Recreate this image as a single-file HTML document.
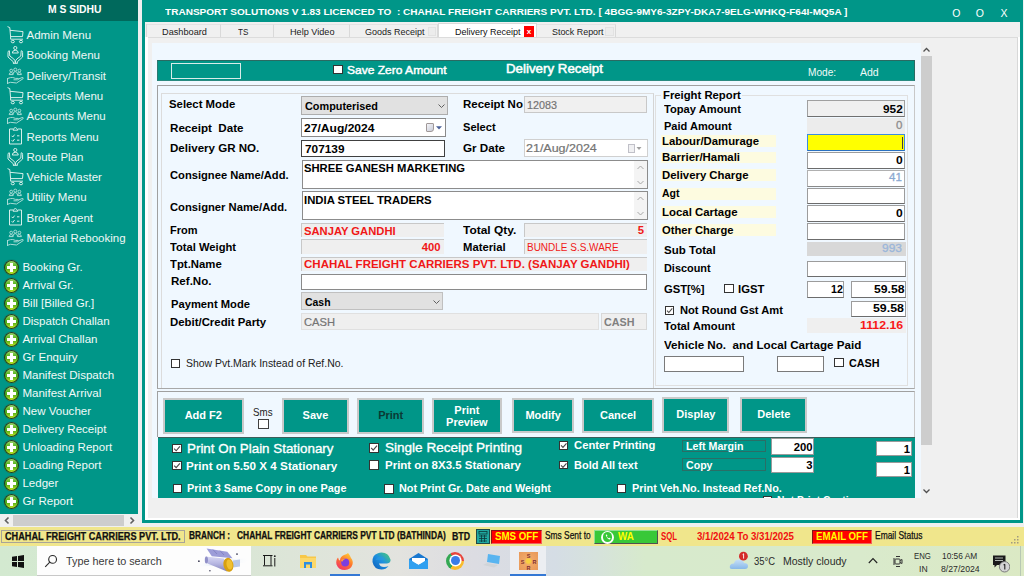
<!DOCTYPE html><html><head><meta charset="utf-8"><style>
*{margin:0;padding:0}
html,body{width:1024px;height:576px;overflow:hidden;background:#f0f0f0;position:relative;font-family:"Liberation Sans",sans-serif}
div,span,svg{position:absolute}
span{white-space:pre;display:block;transform-origin:0 50%}
.plus{width:15px;height:15px;border-radius:50%;background:linear-gradient(180deg,#b0dc80 0%,#60b828 35%,#48a818 55%,#a8d820 85%,#e0f030 100%);box-shadow:0 0 0 1px #143c28 inset,0 0 1px #0a3020}
.plus:before{content:"";position:absolute;left:6px;top:3px;width:3px;height:9px;background:#fff}
.plus:after{content:"";position:absolute;left:3px;top:6px;width:9px;height:3px;background:#fff}
.cb{background:#fff;border:1px solid #333;box-sizing:border-box}
</style></head><body>
<div style="left:0px;top:0px;width:138.00px;height:514.00px;background:#009688"></div>
<div style="left:0px;top:0px;width:138.00px;height:21.00px;background:#00695c"></div>
<span style="left:47.5px;top:5.38px;font-size:10.3px;line-height:10.3px;font-weight:bold;color:#fff;transform:scaleX(1.0056);">M S SIDHU</span>
<svg style="position:absolute;left:7px;top:26.0px;opacity:0.95" width="18" height="18" viewBox="0 0 18 18" fill="none" stroke="#e0f4f0" stroke-width="1"><path d="M0.5 0.6 L2.8 1.6 L3.6 11 L3.6 13.2"/><path d="M3 4.3 L16 5.6 L15.5 10.6 L3.6 10.6"/><path d="M3.6 13.2 L16 13.2"/><ellipse cx="5.8" cy="15.6" rx="1.6" ry="1.2"/><ellipse cx="14" cy="15.6" rx="1.6" ry="1.2"/></svg>
<span style="left:26.5px;top:30.17px;font-size:11.5px;line-height:11.5px;font-weight:normal;color:#eef8f6;">Admin Menu</span>
<svg style="position:absolute;left:7px;top:46.3px;opacity:0.95" width="18" height="18" viewBox="0 0 18 18" fill="none" stroke="#e0f4f0" stroke-width="1"><circle cx="8.3" cy="2" r="1.6"/><path d="M5.3 7 Q5.3 4.3 8.3 4.3 Q11.3 4.3 11.3 7 Z"/><path d="M2.3 4.6 Q1 4.8 1 6.5 L1 11 L6.3 15.8 L6.3 17.3 M14.3 4.6 Q15.6 4.8 15.6 6.5 L15.6 11 L10.3 15.8 L10.3 17.3 M6 17.3 H10.6"/><path d="M2.4 4.8 L2.8 10 L6.8 13 Q8.3 14.2 8.3 17.2 M14.2 4.8 L13.8 10 L9.8 13 Q8.3 14.2 8.3 17.2"/></svg>
<span style="left:26.5px;top:50.44px;font-size:11.5px;line-height:11.5px;font-weight:normal;color:#eef8f6;">Booking Menu</span>
<svg style="position:absolute;left:7px;top:66.5px;opacity:0.75" width="18" height="18" viewBox="0 0 18 18" fill="none" stroke="#e0f4f0" stroke-width="1"><circle cx="4.2" cy="3.6" r="1.4"/><circle cx="8.3" cy="2.6" r="1.5"/><circle cx="12.4" cy="3.6" r="1.4"/><path d="M2.2 7.6 Q2.2 5.6 4.2 5.6 Q6.2 5.6 6.2 7.6 Z M6.2 6.8 Q6.2 4.6 8.3 4.6 Q10.4 4.6 10.4 6.8 M10.4 7.6 Q10.4 5.6 12.4 5.6 Q14.4 5.6 14.4 7.6 Z"/><path d="M0.5 11.5 L3.5 10.6 Q5.5 10 8.5 11.4 L11 11.4 Q12 12.4 10.5 12.8 L6.5 12.8 M0.5 16.3 L3.5 15.3 L9.5 16 L16.2 11.6 Q16.5 10.2 15 10.6 L11 12.2"/><path d="M0.5 11 V17"/></svg>
<span style="left:26.5px;top:70.71px;font-size:11.5px;line-height:11.5px;font-weight:normal;color:#eef8f6;">Delivery/Transit</span>
<svg style="position:absolute;left:7px;top:86.8px;opacity:0.95" width="18" height="18" viewBox="0 0 18 18" fill="none" stroke="#e0f4f0" stroke-width="1"><path d="M0.5 0.6 L2.8 1.6 L3.6 11 L3.6 13.2"/><path d="M3 4.3 L16 5.6 L15.5 10.6 L3.6 10.6"/><path d="M3.6 13.2 L16 13.2"/><ellipse cx="5.8" cy="15.6" rx="1.6" ry="1.2"/><ellipse cx="14" cy="15.6" rx="1.6" ry="1.2"/></svg>
<span style="left:26.5px;top:90.98px;font-size:11.5px;line-height:11.5px;font-weight:normal;color:#eef8f6;">Receipts Menu</span>
<svg style="position:absolute;left:7px;top:107.1px;opacity:0.75" width="18" height="18" viewBox="0 0 18 18" fill="none" stroke="#e0f4f0" stroke-width="1"><circle cx="4.2" cy="3.6" r="1.4"/><circle cx="8.3" cy="2.6" r="1.5"/><circle cx="12.4" cy="3.6" r="1.4"/><path d="M2.2 7.6 Q2.2 5.6 4.2 5.6 Q6.2 5.6 6.2 7.6 Z M6.2 6.8 Q6.2 4.6 8.3 4.6 Q10.4 4.6 10.4 6.8 M10.4 7.6 Q10.4 5.6 12.4 5.6 Q14.4 5.6 14.4 7.6 Z"/><path d="M0.5 11.5 L3.5 10.6 Q5.5 10 8.5 11.4 L11 11.4 Q12 12.4 10.5 12.8 L6.5 12.8 M0.5 16.3 L3.5 15.3 L9.5 16 L16.2 11.6 Q16.5 10.2 15 10.6 L11 12.2"/><path d="M0.5 11 V17"/></svg>
<span style="left:26.5px;top:111.25px;font-size:11.5px;line-height:11.5px;font-weight:normal;color:#eef8f6;">Accounts Menu</span>
<svg style="position:absolute;left:7px;top:127.3px;opacity:0.95" width="18" height="18" viewBox="0 0 18 18" fill="none" stroke="#e0f4f0" stroke-width="1"><path d="M6 2 H2.5 V17 H14.5 V2 H11"/><path d="M6 3.2 L6.8 1.4 Q8.3 -0.4 9.8 1.4 L10.8 3.2 Z"/><path d="M4.6 8.8 L5.8 10 L7.6 7.6 M10 8.8 H12.4 M4.6 13.2 L5.8 14.4 L7.6 12 M10 13.2 H12.4"/></svg>
<span style="left:26.5px;top:131.52px;font-size:11.5px;line-height:11.5px;font-weight:normal;color:#eef8f6;">Reports Menu</span>
<svg style="position:absolute;left:7px;top:147.6px;opacity:0.95" width="18" height="18" viewBox="0 0 18 18" fill="none" stroke="#e0f4f0" stroke-width="1"><circle cx="8.3" cy="2" r="1.6"/><path d="M5.3 7 Q5.3 4.3 8.3 4.3 Q11.3 4.3 11.3 7 Z"/><path d="M2.3 4.6 Q1 4.8 1 6.5 L1 11 L6.3 15.8 L6.3 17.3 M14.3 4.6 Q15.6 4.8 15.6 6.5 L15.6 11 L10.3 15.8 L10.3 17.3 M6 17.3 H10.6"/><path d="M2.4 4.8 L2.8 10 L6.8 13 Q8.3 14.2 8.3 17.2 M14.2 4.8 L13.8 10 L9.8 13 Q8.3 14.2 8.3 17.2"/></svg>
<span style="left:26.5px;top:151.79px;font-size:11.5px;line-height:11.5px;font-weight:normal;color:#eef8f6;">Route Plan</span>
<svg style="position:absolute;left:7px;top:167.9px;opacity:0.95" width="18" height="18" viewBox="0 0 18 18" fill="none" stroke="#e0f4f0" stroke-width="1"><path d="M0.5 0.6 L2.8 1.6 L3.6 11 L3.6 13.2"/><path d="M3 4.3 L16 5.6 L15.5 10.6 L3.6 10.6"/><path d="M3.6 13.2 L16 13.2"/><ellipse cx="5.8" cy="15.6" rx="1.6" ry="1.2"/><ellipse cx="14" cy="15.6" rx="1.6" ry="1.2"/></svg>
<span style="left:26.5px;top:172.06px;font-size:11.5px;line-height:11.5px;font-weight:normal;color:#eef8f6;">Vehicle Master</span>
<svg style="position:absolute;left:7px;top:188.2px;opacity:0.75" width="18" height="18" viewBox="0 0 18 18" fill="none" stroke="#e0f4f0" stroke-width="1"><circle cx="4.2" cy="3.6" r="1.4"/><circle cx="8.3" cy="2.6" r="1.5"/><circle cx="12.4" cy="3.6" r="1.4"/><path d="M2.2 7.6 Q2.2 5.6 4.2 5.6 Q6.2 5.6 6.2 7.6 Z M6.2 6.8 Q6.2 4.6 8.3 4.6 Q10.4 4.6 10.4 6.8 M10.4 7.6 Q10.4 5.6 12.4 5.6 Q14.4 5.6 14.4 7.6 Z"/><path d="M0.5 11.5 L3.5 10.6 Q5.5 10 8.5 11.4 L11 11.4 Q12 12.4 10.5 12.8 L6.5 12.8 M0.5 16.3 L3.5 15.3 L9.5 16 L16.2 11.6 Q16.5 10.2 15 10.6 L11 12.2"/><path d="M0.5 11 V17"/></svg>
<span style="left:26.5px;top:192.33px;font-size:11.5px;line-height:11.5px;font-weight:normal;color:#eef8f6;">Utility Menu</span>
<svg style="position:absolute;left:7px;top:208.4px;opacity:0.95" width="18" height="18" viewBox="0 0 18 18" fill="none" stroke="#e0f4f0" stroke-width="1"><path d="M6 2 H2.5 V17 H14.5 V2 H11"/><path d="M6 3.2 L6.8 1.4 Q8.3 -0.4 9.8 1.4 L10.8 3.2 Z"/><path d="M4.6 8.8 L5.8 10 L7.6 7.6 M10 8.8 H12.4 M4.6 13.2 L5.8 14.4 L7.6 12 M10 13.2 H12.4"/></svg>
<span style="left:26.5px;top:212.60px;font-size:11.5px;line-height:11.5px;font-weight:normal;color:#eef8f6;">Broker Agent</span>
<svg style="position:absolute;left:7px;top:228.7px;opacity:0.75" width="18" height="18" viewBox="0 0 18 18" fill="none" stroke="#e0f4f0" stroke-width="1"><circle cx="4.2" cy="3.6" r="1.4"/><circle cx="8.3" cy="2.6" r="1.5"/><circle cx="12.4" cy="3.6" r="1.4"/><path d="M2.2 7.6 Q2.2 5.6 4.2 5.6 Q6.2 5.6 6.2 7.6 Z M6.2 6.8 Q6.2 4.6 8.3 4.6 Q10.4 4.6 10.4 6.8 M10.4 7.6 Q10.4 5.6 12.4 5.6 Q14.4 5.6 14.4 7.6 Z"/><path d="M0.5 11.5 L3.5 10.6 Q5.5 10 8.5 11.4 L11 11.4 Q12 12.4 10.5 12.8 L6.5 12.8 M0.5 16.3 L3.5 15.3 L9.5 16 L16.2 11.6 Q16.5 10.2 15 10.6 L11 12.2"/><path d="M0.5 11 V17"/></svg>
<span style="left:26.5px;top:232.87px;font-size:11.5px;line-height:11.5px;font-weight:normal;color:#eef8f6;">Material Rebooking</span>
<div class="plus" style="left:3.9px;top:260.0px"></div>
<span style="left:22.4px;top:262.12px;font-size:11.55px;line-height:11.55px;font-weight:normal;color:#f2faf8;">Booking Gr.</span>
<div class="plus" style="left:3.9px;top:278.0px"></div>
<span style="left:22.4px;top:280.12px;font-size:11.55px;line-height:11.55px;font-weight:normal;color:#f2faf8;">Arrival Gr.</span>
<div class="plus" style="left:3.9px;top:296.0px"></div>
<span style="left:22.4px;top:298.12px;font-size:11.55px;line-height:11.55px;font-weight:normal;color:#f2faf8;">Bill [Billed Gr.]</span>
<div class="plus" style="left:3.9px;top:314.0px"></div>
<span style="left:22.4px;top:316.12px;font-size:11.55px;line-height:11.55px;font-weight:normal;color:#f2faf8;">Dispatch Challan</span>
<div class="plus" style="left:3.9px;top:332.0px"></div>
<span style="left:22.4px;top:334.12px;font-size:11.55px;line-height:11.55px;font-weight:normal;color:#f2faf8;">Arrival Challan</span>
<div class="plus" style="left:3.9px;top:350.0px"></div>
<span style="left:22.4px;top:352.12px;font-size:11.55px;line-height:11.55px;font-weight:normal;color:#f2faf8;">Gr Enquiry</span>
<div class="plus" style="left:3.9px;top:368.0px"></div>
<span style="left:22.4px;top:370.12px;font-size:11.55px;line-height:11.55px;font-weight:normal;color:#f2faf8;">Manifest Dispatch</span>
<div class="plus" style="left:3.9px;top:386.0px"></div>
<span style="left:22.4px;top:388.12px;font-size:11.55px;line-height:11.55px;font-weight:normal;color:#f2faf8;">Manifest Arrival</span>
<div class="plus" style="left:3.9px;top:404.0px"></div>
<span style="left:22.4px;top:406.12px;font-size:11.55px;line-height:11.55px;font-weight:normal;color:#f2faf8;">New Voucher</span>
<div class="plus" style="left:3.9px;top:422.0px"></div>
<span style="left:22.4px;top:424.12px;font-size:11.55px;line-height:11.55px;font-weight:normal;color:#f2faf8;">Delivery Receipt</span>
<div class="plus" style="left:3.9px;top:440.0px"></div>
<span style="left:22.4px;top:442.12px;font-size:11.55px;line-height:11.55px;font-weight:normal;color:#f2faf8;">Unloading Report</span>
<div class="plus" style="left:3.9px;top:458.0px"></div>
<span style="left:22.4px;top:460.12px;font-size:11.55px;line-height:11.55px;font-weight:normal;color:#f2faf8;">Loading Report</span>
<div class="plus" style="left:3.9px;top:476.0px"></div>
<span style="left:22.4px;top:478.12px;font-size:11.55px;line-height:11.55px;font-weight:normal;color:#f2faf8;">Ledger</span>
<div class="plus" style="left:3.9px;top:494.0px"></div>
<span style="left:22.4px;top:496.12px;font-size:11.55px;line-height:11.55px;font-weight:normal;color:#f2faf8;">Gr Report</span>
<div style="left:0px;top:514px;width:138.00px;height:13.00px;background:#f0f0f0"></div>
<div style="left:13px;top:515px;width:111.00px;height:11.00px;background:#cdcdcd"></div>
<svg style="position:absolute;left:3px;top:516px" width="8" height="9" viewBox="0 0 8 9" fill="none" stroke="#606060" stroke-width="1.6"><path d="M5.5 1.5 L2.5 4.5 L5.5 7.5"/></svg>
<svg style="position:absolute;left:128px;top:516px" width="8" height="9" viewBox="0 0 8 9" fill="none" stroke="#606060" stroke-width="1.6"><path d="M2.5 1.5 L5.5 4.5 L2.5 7.5"/></svg>
<div style="left:138px;top:0px;width:3.60px;height:527.00px;background:#f0f0f0"></div>
<div style="left:141.6px;top:0px;width:881.40px;height:523.40px;background:#009688"></div>
<div style="left:144.8px;top:22px;width:875.20px;height:497.60px;background:#f0f0f0"></div>
<span style="left:165px;top:7.63px;font-size:9.3px;line-height:9.3px;font-weight:bold;color:#fff;transform:scaleX(1.0800);">TRANSPORT SOLUTIONS V 1.83 LICENCED TO &nbsp;: CHAHAL FREIGHT CARRIERS PVT. LTD. [ 4BGG-9MY6-3ZPY-DKA7-9ELG-WHKQ-F64I-MQ5A ]</span>
<span style="left:656.40px;width:600px;text-align:center;top:8.01px;font-size:10.5px;line-height:10.5px;font-weight:normal;color:#fff;">O</span>
<span style="left:679.80px;width:600px;text-align:center;top:8.01px;font-size:10.5px;line-height:10.5px;font-weight:normal;color:#fff;">O</span>
<span style="left:704.10px;width:600px;text-align:center;top:8.01px;font-size:10.5px;line-height:10.5px;font-weight:normal;color:#fff;">X</span>
<div style="left:144.8px;top:23.5px;width:875.20px;height:14.00px;background:#f0f0f0"></div>
<div style="left:145.5px;top:23.5px;width:75.70px;height:14.00px;background:#f0f0f0;border-right:1px solid #d9d9d9;box-sizing:border-box;border-top:1px solid #e3e3e3"></div>
<div style="left:221.2px;top:23.5px;width:52.60px;height:14.00px;background:#f0f0f0;border-right:1px solid #d9d9d9;box-sizing:border-box;border-top:1px solid #e3e3e3"></div>
<div style="left:273.8px;top:23.5px;width:75.80px;height:14.00px;background:#f0f0f0;border-right:1px solid #d9d9d9;box-sizing:border-box;border-top:1px solid #e3e3e3"></div>
<div style="left:349.6px;top:23.5px;width:88.80px;height:14.00px;background:#f0f0f0;border-right:1px solid #d9d9d9;box-sizing:border-box;border-top:1px solid #e3e3e3"></div>
<div style="left:537.4px;top:23.5px;width:78.80px;height:14.00px;background:#f0f0f0;border-right:1px solid #d9d9d9;box-sizing:border-box;border-top:1px solid #e3e3e3"></div>
<div style="left:145.5px;top:23.5px;width:1.00px;height:14.00px;background:#d9d9d9"></div>
<span style="left:161.6px;top:28.41px;font-size:9.2px;line-height:9.2px;font-weight:normal;color:#202020;transform:scaleX(0.9990);">Dashboard</span>
<span style="left:237.5px;top:28.41px;font-size:9.2px;line-height:9.2px;font-weight:normal;color:#202020;transform:scaleX(0.8773);">TS</span>
<span style="left:289.7px;top:28.41px;font-size:9.2px;line-height:9.2px;font-weight:normal;color:#202020;transform:scaleX(0.9938);">Help Video</span>
<span style="left:364.5px;top:28.41px;font-size:9.2px;line-height:9.2px;font-weight:normal;color:#202020;transform:scaleX(0.9791);">Goods Receipt</span>
<div style="left:427.5px;top:27px;width:8.50px;height:9.00px;background:#ececec;border:1px solid #e2e2e2;box-sizing:border-box"></div>
<span style="left:551.5px;top:28.41px;font-size:9.2px;line-height:9.2px;font-weight:normal;color:#202020;transform:scaleX(0.9698);">Stock Report</span>
<div style="left:605px;top:27px;width:9.00px;height:9.00px;background:#ececec;border:1px solid #e2e2e2;box-sizing:border-box"></div>
<div style="left:438.4px;top:22.9px;width:99.00px;height:15.10px;background:#fff;border:1px solid #d9d9d9;border-bottom:none;box-sizing:border-box"></div>
<span style="left:455.4px;top:27.80px;font-size:9.1px;line-height:9.1px;font-weight:normal;color:#101010;transform:scaleX(0.9909);">Delivery Receipt</span>
<div style="left:523.8px;top:26.2px;width:10.30px;height:10.40px;background:#f00"></div>
<span style="left:229.00px;width:600px;text-align:center;top:28.13px;font-size:8px;line-height:8px;font-weight:bold;color:#fff;">x</span>
<div style="left:144.8px;top:37.2px;width:875.20px;height:482.80px;background:#fff"></div>
<div style="left:148.3px;top:37.2px;width:870.20px;height:480.50px;background:#f0f0f0;border-right:1px solid #d8d8d8;border-top:1px solid #dcdcdc;box-sizing:border-box"></div>
<div style="left:151.5px;top:42.7px;width:769.50px;height:455.10px;background:#f0f8ff"></div>
<div style="left:921px;top:43px;width:11.00px;height:454.80px;background:#f0f0f0"></div>
<div style="left:921px;top:56px;width:11.00px;height:388.60px;background:#cdcdcd"></div>
<svg style="position:absolute;left:922px;top:46px" width="9" height="8" viewBox="0 0 9 8" fill="none" stroke="#505050" stroke-width="1.3"><path d="M1.5 5.5 L4.5 2.5 L7.5 5.5"/></svg>
<svg style="position:absolute;left:922px;top:487px" width="9" height="8" viewBox="0 0 9 8" fill="none" stroke="#505050" stroke-width="1.3"><path d="M1.5 2.5 L4.5 5.5 L7.5 2.5"/></svg>
<div style="left:157.4px;top:60px;width:757.60px;height:21.40px;background:#009688;border-top:1px solid #2a6a62;border-right:1px solid #2a6a62;border-left:1px solid #2a7a72;border-bottom:1px solid #2a8a80;box-sizing:border-box"></div>
<div style="left:171.4px;top:62.9px;width:70.10px;height:16.00px;border:1px solid #d8ece9;box-sizing:border-box"></div>
<div class="cb" style="left:333.3px;top:65px;width:9.7px;height:8.8px"></div>
<span style="left:347.4px;top:64.93px;font-size:11.3px;line-height:11.3px;font-weight:normal;color:#fff;transform:scaleX(1.0638);-webkit-text-stroke:0.45px #fff;">Save Zero Amount</span>
<span style="left:505.6px;top:62.66px;font-size:12.8px;line-height:12.8px;font-weight:normal;color:#fff;transform:scaleX(1.0401);-webkit-text-stroke:0.5px #fff;">Delivery Receipt</span>
<span style="left:807.7px;top:68.34px;font-size:10px;line-height:10px;font-weight:normal;color:#f0faf8;transform:scaleX(1.0110);">Mode:</span>
<span style="left:859.7px;top:67.84px;font-size:10px;line-height:10px;font-weight:normal;color:#f0faf8;transform:scaleX(1.0510);">Add</span>
<div style="left:157.4px;top:85.4px;width:757.60px;height:303.60px;border:1px solid #a0a0a0;border-right-color:#c8c8c8;border-bottom:1.5px solid #a8a8a8;box-sizing:border-box"></div>
<div style="left:161.3px;top:93px;width:492.90px;height:295.00px;border:1px solid #dcdcdc;border-bottom:none;border-right:1px solid #d4d4d4;box-sizing:border-box"></div>
<span style="left:169.2px;top:98.85px;font-size:11.4px;line-height:11.4px;font-weight:bold;color:#000;transform:scaleX(0.9960);">Select Mode</span>
<div style="left:301.4px;top:96.3px;width:146.30px;height:18.40px;background:#e1e1e1;border:1px solid #adadad;box-sizing:border-box"></div>
<span style="left:305px;top:100.99px;font-size:11px;line-height:11px;font-weight:bold;color:#000;transform:scaleX(0.9871);">Computerised</span>
<svg style="position:absolute;left:436.5px;top:101.5px" width="9" height="8" viewBox="0 0 9 8" fill="none" stroke="#606060" stroke-width="1"><path d="M1.5 2.5 L4.5 5.5 L7.5 2.5"/></svg>
<span style="left:462.9px;top:99.35px;font-size:11.4px;line-height:11.4px;font-weight:bold;color:#000;transform:scaleX(1.0068);">Receipt No</span>
<div style="left:524.1px;top:95.6px;width:122.90px;height:17.00px;background:#f0f0f0;border:1px solid #c8c8c8;box-sizing:border-box"></div>
<span style="left:527px;top:99.89px;font-size:11px;line-height:11px;font-weight:normal;color:#747474;transform:scaleX(0.9808);-webkit-text-stroke:0.2px currentColor;">12083</span>
<span style="left:169.7px;top:123.15px;font-size:11.4px;line-height:11.4px;font-weight:bold;color:#000;transform:scaleX(1.0185);">Receipt &nbsp;Date</span>
<div style="left:301.4px;top:118.4px;width:144.20px;height:18.30px;background:#fff;border:1px solid #8a8a8a;box-sizing:border-box"></div>
<span style="left:303.5px;top:122.93px;font-size:11.3px;line-height:11.3px;font-weight:bold;color:#000;transform:scaleX(1.0693);">27/Aug/2024</span>
<div style="left:426px;top:123px;width:8px;height:9px;background:linear-gradient(135deg,#f4f4f8,#c8ccd8);border:1px solid #a09898;box-sizing:border-box;border-radius:1px 1px 3px 1px"></div>
<svg style="position:absolute;left:435.5px;top:125.5px" width="6" height="4" viewBox="0 0 6 4"><path d="M0 0.3 L6 0.3 L3 3.5 Z" fill="#4a6098"/></svg>
<span style="left:462.9px;top:121.55px;font-size:11.4px;line-height:11.4px;font-weight:bold;color:#000;transform:scaleX(0.9714);">Select</span>
<span style="left:169.7px;top:143.05px;font-size:11.4px;line-height:11.4px;font-weight:bold;color:#000;transform:scaleX(1.0148);">Delivery GR NO.</span>
<div style="left:301.4px;top:140.2px;width:143.60px;height:16.90px;background:#fff;border:1px solid #404040;box-sizing:border-box"></div>
<span style="left:305px;top:144.03px;font-size:11.3px;line-height:11.3px;font-weight:bold;color:#000;transform:scaleX(1.0478);">707139</span>
<span style="left:462.9px;top:142.85px;font-size:11.4px;line-height:11.4px;font-weight:bold;color:#000;transform:scaleX(1.0232);">Gr Date</span>
<div style="left:524.1px;top:139.4px;width:124.20px;height:17.60px;background:#fff;border:1px solid #d0d0d0;box-sizing:border-box"></div>
<span style="left:526px;top:143.22px;font-size:11.2px;line-height:11.2px;font-weight:normal;color:#747474;transform:scaleX(1.1158);-webkit-text-stroke:0.2px currentColor;">21/Aug/2024</span>
<div style="left:628px;top:144px;width:7px;height:9px;background:#f0f0f2;border:1px solid #c0c0c8;box-sizing:border-box"></div>
<svg style="position:absolute;left:636px;top:146px" width="6" height="5" viewBox="0 0 6 5"><path d="M0.5 1 L5.5 1 L3 4 Z" fill="#a0a0a0"/></svg>
<span style="left:169.7px;top:170.25px;font-size:11.4px;line-height:11.4px;font-weight:bold;color:#000;transform:scaleX(0.9811);">Consignee Name/Add.</span>
<div style="left:301.5px;top:159.7px;width:346.00px;height:29.30px;background:#fff;border:1px solid #8c8c8c;box-sizing:border-box"></div>
<span style="left:304.4px;top:163.13px;font-size:11.3px;line-height:11.3px;font-weight:bold;color:#000;transform:scaleX(0.9948);">SHREE GANESH MARKETING</span>
<span style="left:169.7px;top:201.65px;font-size:11.4px;line-height:11.4px;font-weight:bold;color:#000;transform:scaleX(0.9842);">Consigner Name/Add.</span>
<div style="left:301.5px;top:191.3px;width:346.00px;height:28.70px;background:#fff;border:1px solid #8c8c8c;box-sizing:border-box"></div>
<span style="left:304.4px;top:194.83px;font-size:11.3px;line-height:11.3px;font-weight:bold;color:#000;transform:scaleX(1.0020);">INDIA STEEL TRADERS</span>
<div style="left:634px;top:160.7px;width:12.50px;height:27.30px;background:#f4f4f4"></div>
<svg style="position:absolute;left:636px;top:163.7px" width="9" height="7" viewBox="0 0 9 7" fill="none" stroke="#a8a8a8" stroke-width="1"><path d="M1.5 5 L4.5 2 L7.5 5"/></svg>
<svg style="position:absolute;left:636px;top:179.0px" width="9" height="7" viewBox="0 0 9 7" fill="none" stroke="#a8a8a8" stroke-width="1"><path d="M1.5 2 L4.5 5 L7.5 2"/></svg>
<div style="left:634px;top:192.3px;width:12.50px;height:26.70px;background:#f4f4f4"></div>
<svg style="position:absolute;left:636px;top:195.3px" width="9" height="7" viewBox="0 0 9 7" fill="none" stroke="#a8a8a8" stroke-width="1"><path d="M1.5 5 L4.5 2 L7.5 5"/></svg>
<svg style="position:absolute;left:636px;top:210.0px" width="9" height="7" viewBox="0 0 9 7" fill="none" stroke="#a8a8a8" stroke-width="1"><path d="M1.5 2 L4.5 5 L7.5 2"/></svg>
<span style="left:169.8px;top:225.45px;font-size:11.4px;line-height:11.4px;font-weight:bold;color:#000;transform:scaleX(0.9657);">From</span>
<div style="left:301.4px;top:222.6px;width:142.50px;height:14.30px;background:#efefef;border-left:1px solid #c8c8c8;border-top:1px solid #c8c8c8;box-sizing:border-box"></div>
<span style="left:304.4px;top:225.82px;font-size:11.2px;line-height:11.2px;font-weight:bold;color:#f01818;transform:scaleX(1.0023);">SANJAY GANDHI</span>
<span style="left:463.4px;top:225.35px;font-size:11.4px;line-height:11.4px;font-weight:bold;color:#000;transform:scaleX(1.0465);">Total Qty.</span>
<div style="left:524.2px;top:222.6px;width:123.10px;height:14.30px;background:#efefef;border-left:1px solid #c8c8c8;border-top:1px solid #c8c8c8;box-sizing:border-box"></div>
<span style="right:380.00px;top:225.33px;font-size:11.3px;line-height:11.3px;font-weight:bold;color:#f01818;">5</span>
<span style="left:169.8px;top:242.15px;font-size:11.4px;line-height:11.4px;font-weight:bold;color:#000;transform:scaleX(0.9810);">Total Weight</span>
<div style="left:301.4px;top:239.3px;width:142.50px;height:14.30px;background:#efefef;border-left:1px solid #c8c8c8;border-top:1px solid #c8c8c8;box-sizing:border-box"></div>
<span style="right:583.50px;top:242.23px;font-size:11.3px;line-height:11.3px;font-weight:bold;color:#f01818;">400</span>
<span style="left:463.4px;top:242.15px;font-size:11.4px;line-height:11.4px;font-weight:bold;color:#000;transform:scaleX(0.9896);">Material</span>
<div style="left:524.2px;top:239.3px;width:123.10px;height:14.30px;background:#efefef;border-left:1px solid #c8c8c8;border-top:1px solid #c8c8c8;box-sizing:border-box"></div>
<span style="left:527.3px;top:242.94px;font-size:10px;line-height:10px;font-weight:normal;color:#f01818;transform:scaleX(0.9981);">BUNDLE S.S.WARE</span>
<span style="left:169.8px;top:259.45px;font-size:11.4px;line-height:11.4px;font-weight:bold;color:#000;transform:scaleX(0.9962);">Tpt.Name</span>
<div style="left:301.4px;top:256.6px;width:345.90px;height:14.00px;background:#efefef;border-left:1px solid #c8c8c8;border-top:1px solid #c8c8c8;box-sizing:border-box"></div>
<span style="left:304.4px;top:258.97px;font-size:11.5px;line-height:11.5px;font-weight:bold;color:#f01818;transform:scaleX(1.0011);">CHAHAL FREIGHT CARRIERS PVT. LTD. (SANJAY GANDHI)</span>
<span style="left:170.5px;top:275.55px;font-size:11.4px;line-height:11.4px;font-weight:bold;color:#000;transform:scaleX(1.0159);">Ref.No.</span>
<div style="left:301.4px;top:274.3px;width:345.30px;height:16.10px;background:#fff;border:1px solid #8a8a8a;box-sizing:border-box"></div>
<span style="left:170.5px;top:299.15px;font-size:11.4px;line-height:11.4px;font-weight:bold;color:#000;transform:scaleX(0.9828);">Payment Mode</span>
<div style="left:301.4px;top:292.2px;width:141.30px;height:18.00px;background:#e1e1e1;border:1px solid #c0c0c0;box-sizing:border-box"></div>
<span style="left:304.5px;top:297.13px;font-size:11.3px;line-height:11.3px;font-weight:bold;color:#000;transform:scaleX(0.9231);">Cash</span>
<svg style="position:absolute;left:431.5px;top:297.5px" width="9" height="8" viewBox="0 0 9 8" fill="none" stroke="#606060" stroke-width="1"><path d="M1.5 2.5 L4.5 5.5 L7.5 2.5"/></svg>
<span style="left:169.8px;top:316.55px;font-size:11.4px;line-height:11.4px;font-weight:bold;color:#000;transform:scaleX(0.9999);">Debit/Credit Party</span>
<div style="left:301.4px;top:313.2px;width:297.30px;height:17.30px;background:#efefef;border:1px solid #e0e0e0;box-sizing:border-box"></div>
<span style="left:304px;top:317.42px;font-size:11.2px;line-height:11.2px;font-weight:normal;color:#747474;transform:scaleX(0.9973);-webkit-text-stroke:0.2px currentColor;">CASH</span>
<div style="left:601.1px;top:313.2px;width:45.60px;height:17.30px;background:#efefef;border:1px solid #d8d8d8;box-sizing:border-box"></div>
<span style="left:604px;top:317.42px;font-size:11.2px;line-height:11.2px;font-weight:bold;color:#808080;transform:scaleX(0.9622);">CASH</span>
<div class="cb" style="left:170.7px;top:358.5px;width:9.7px;height:9.4px"></div>
<span style="left:185.6px;top:358.21px;font-size:10.5px;line-height:10.5px;font-weight:normal;color:#202020;transform:scaleX(0.9953);">Show Pvt.Mark Instead of Ref.No.</span>
<div style="left:655px;top:95.3px;width:253.30px;height:290.50px;border:1px solid #e0e0e0;box-sizing:border-box"></div>
<div style="left:661px;top:90px;width:81.00px;height:10.00px;background:#f0f8ff"></div>
<span style="left:662.5px;top:90.23px;font-size:11.3px;line-height:11.3px;font-weight:bold;color:#000;transform:scaleX(0.9997);">Freight Report</span>
<span style="left:664.4px;top:103.75px;font-size:11.4px;line-height:11.4px;font-weight:bold;color:#000;transform:scaleX(0.9799);">Topay Amount</span>
<div style="left:807.2px;top:100.3px;width:97.50px;height:17.20px;background:#f0f0f0;border:1px solid #a0a0a0;border-bottom:1.5px solid #707070;box-sizing:border-box"></div>
<span style="left:883px;top:103.77px;font-size:11.5px;line-height:11.5px;font-weight:bold;color:#000;transform:scaleX(1.0267);">952</span>
<span style="left:663.5px;top:120.65px;font-size:11.4px;line-height:11.4px;font-weight:bold;color:#000;transform:scaleX(0.9681);">Paid Amount</span>
<div style="left:807.2px;top:118.3px;width:97.50px;height:15.90px;background:#ececec"></div>
<span style="left:896.3px;top:120.47px;font-size:11.5px;line-height:11.5px;font-weight:normal;color:#8c8c8c;transform:scaleX(1.0007);-webkit-text-stroke:0.3px currentColor;">0</span>
<div style="left:660.6px;top:134.7px;width:115.00px;height:12.00px;background:#fdfbe0"></div>
<span style="left:661.5px;top:135.65px;font-size:11.4px;line-height:11.4px;font-weight:bold;color:#000;transform:scaleX(0.9952);">Labour/Damurage</span>
<div style="left:807.4px;top:134.4px;width:97.20px;height:16.90px;background:#ffff00;border:1px solid #3c8ce0;border-bottom:1.5px solid #2a70c0;box-sizing:border-box"></div>
<div style="left:901.6px;top:136.5px;width:1.00px;height:12.50px;background:#404040"></div>
<div style="left:660.6px;top:151.7px;width:115.00px;height:11.60px;background:#fdfbe0"></div>
<span style="left:661.5px;top:151.75px;font-size:11.4px;line-height:11.4px;font-weight:bold;color:#000;transform:scaleX(1.0016);">Barrier/Hamali</span>
<div style="left:807.2px;top:152.2px;width:97.50px;height:16.70px;background:#fff;border:1px solid #9c9c9c;border-bottom:1.5px solid #6c6c6c;box-sizing:border-box"></div>
<span style="left:895.8px;top:154.77px;font-size:11.5px;line-height:11.5px;font-weight:bold;color:#000;transform:scaleX(1.0476);">0</span>
<div style="left:660.6px;top:169.4px;width:115.00px;height:12.00px;background:#fdfbe0"></div>
<span style="left:661.5px;top:170.45px;font-size:11.4px;line-height:11.4px;font-weight:bold;color:#000;transform:scaleX(0.9973);">Delivery Charge</span>
<div style="left:807.2px;top:170.3px;width:97.50px;height:16.70px;background:#fff;border:1px solid #b0b0b0;border-bottom:1.5px solid #8a8a8a;box-sizing:border-box"></div>
<span style="left:889.1px;top:171.97px;font-size:11.5px;line-height:11.5px;font-weight:normal;color:#8aa8d0;transform:scaleX(1.0007);-webkit-text-stroke:0.3px currentColor;">41</span>
<div style="left:660.6px;top:187.8px;width:115.00px;height:12.20px;background:#fdfbe0"></div>
<span style="left:661.5px;top:188.45px;font-size:11.4px;line-height:11.4px;font-weight:bold;color:#000;transform:scaleX(0.9222);">Agt</span>
<div style="left:807.2px;top:187.8px;width:97.50px;height:16.60px;background:#fff;border:1px solid #9c9c9c;border-bottom:1.5px solid #6c6c6c;box-sizing:border-box"></div>
<div style="left:660.6px;top:205.8px;width:115.00px;height:12.20px;background:#fdfbe0"></div>
<span style="left:661.5px;top:207.25px;font-size:11.4px;line-height:11.4px;font-weight:bold;color:#000;transform:scaleX(1.0023);">Local Cartage</span>
<div style="left:807.2px;top:205px;width:97.50px;height:17.20px;background:#fff;border:1px solid #9c9c9c;border-bottom:1.5px solid #6c6c6c;box-sizing:border-box"></div>
<span style="left:895.8px;top:208.17px;font-size:11.5px;line-height:11.5px;font-weight:bold;color:#000;transform:scaleX(1.0476);">0</span>
<div style="left:660.6px;top:223.9px;width:115.00px;height:11.70px;background:#fdfbe0"></div>
<span style="left:661.5px;top:224.85px;font-size:11.4px;line-height:11.4px;font-weight:bold;color:#000;transform:scaleX(0.9823);">Other Charge</span>
<div style="left:807.2px;top:223px;width:97.50px;height:16.70px;background:#fff;border:1px solid #9c9c9c;border-bottom:1.5px solid #6c6c6c;box-sizing:border-box"></div>
<span style="left:663.9px;top:244.85px;font-size:11.4px;line-height:11.4px;font-weight:bold;color:#000;transform:scaleX(1.0110);">Sub Total</span>
<div style="left:807.2px;top:241.7px;width:98.40px;height:13.90px;background:#d8d8d8"></div>
<span style="left:882px;top:243.47px;font-size:11.5px;line-height:11.5px;font-weight:normal;color:#9ab6da;transform:scaleX(1.0371);-webkit-text-stroke:0.3px currentColor;">993</span>
<span style="left:663.9px;top:263.45px;font-size:11.4px;line-height:11.4px;font-weight:bold;color:#000;transform:scaleX(0.9563);">Discount</span>
<div style="left:807.2px;top:260.6px;width:98.40px;height:16.60px;background:#fff;border:1px solid #9c9c9c;border-bottom:1.5px solid #6c6c6c;box-sizing:border-box"></div>
<span style="left:663.9px;top:283.75px;font-size:11.4px;line-height:11.4px;font-weight:bold;color:#000;transform:scaleX(0.9871);">GST[%]</span>
<div class="cb" style="left:724.4px;top:284.2px;width:9.5px;height:9.1px"></div>
<span style="left:738.3px;top:283.75px;font-size:11.4px;line-height:11.4px;font-weight:bold;color:#000;transform:scaleX(0.9932);">IGST</span>
<div style="left:807.2px;top:281.4px;width:37.20px;height:16.60px;background:#fff;border:1px solid #9c9c9c;border-bottom:1.5px solid #6c6c6c;box-sizing:border-box"></div>
<span style="left:830.6px;top:284.17px;font-size:11.5px;line-height:11.5px;font-weight:bold;color:#000;transform:scaleX(0.9303);">12</span>
<div style="left:851.2px;top:281.4px;width:54.40px;height:16.60px;background:#fff;border:1px solid #9c9c9c;border-bottom:1.5px solid #6c6c6c;box-sizing:border-box"></div>
<span style="left:873.5px;top:283.91px;font-size:11.8px;line-height:11.8px;font-weight:bold;color:#000;transform:scaleX(1.0332);">59.58</span>
<div class="cb" style="left:665.3px;top:305.6px;width:9.1px;height:9.1px"></div>
<svg style="position:absolute;left:665.3px;top:305.6px" width="9.1" height="9.1" viewBox="0 0 10 10" preserveAspectRatio="none" fill="none" stroke="#4a4a4a" stroke-width="1.15"><path d="M2.2 5 L4.2 7.2 L8 2.6"/></svg>
<span style="left:680px;top:305.15px;font-size:11.4px;line-height:11.4px;font-weight:bold;color:#000;transform:scaleX(0.9776);">Not Round Gst Amt</span>
<div style="left:851.2px;top:300.8px;width:54.40px;height:16.20px;background:#fff;border:1px solid #9c9c9c;border-bottom:1.5px solid #6c6c6c;box-sizing:border-box"></div>
<span style="left:873.1px;top:302.91px;font-size:11.8px;line-height:11.8px;font-weight:bold;color:#000;transform:scaleX(1.0467);">59.58</span>
<span style="left:664px;top:321.25px;font-size:11.4px;line-height:11.4px;font-weight:bold;color:#000;transform:scaleX(0.9856);">Total Amount</span>
<div style="left:807.3px;top:318.1px;width:98.70px;height:14.80px;background:#efefef"></div>
<span style="left:859.6px;top:320.27px;font-size:11.5px;line-height:11.5px;font-weight:bold;color:#f81818;transform:scaleX(1.0719);">1112.16</span>
<span style="left:664.4px;top:340.15px;font-size:11.4px;line-height:11.4px;font-weight:bold;color:#000;transform:scaleX(1.0219);">Vehicle No. &nbsp;and Local Cartage Paid</span>
<div style="left:664.4px;top:355.6px;width:80.00px;height:16.90px;background:#fff;border:1px solid #7a7a7a;box-sizing:border-box"></div>
<div style="left:777.2px;top:355.6px;width:46.40px;height:16.90px;background:#fff;border:1px solid #7a7a7a;box-sizing:border-box"></div>
<div class="cb" style="left:834.2px;top:358.3px;width:9.4px;height:9.2px"></div>
<span style="left:848.6px;top:358.25px;font-size:11.4px;line-height:11.4px;font-weight:bold;color:#000;transform:scaleX(0.9481);">CASH</span>
<div style="left:157.2px;top:390.8px;width:758.10px;height:46.50px;border-top:1.2px solid #a0a0a0;border-left:1px solid #a0a0a0;border-right:1px solid #c8c8c8;box-sizing:border-box"></div>
<div style="left:162.9px;top:397.6px;width:80.80px;height:36.20px;background:#009688;border:2px solid #c9c9c9;box-sizing:border-box"></div>
<span style="left:-96.70px;width:600px;text-align:center;top:410.49px;font-size:11px;line-height:11px;font-weight:bold;color:#fff;">Add F2</span>
<span style="left:252.5px;top:406.51px;font-size:10.5px;line-height:10.5px;font-weight:normal;color:#202020;transform:scaleX(0.9286);">Sms</span>
<div class="cb" style="left:258.1px;top:419.2px;width:10.6px;height:9.8px;border-color:#404040"></div>
<div style="left:281.7px;top:397.6px;width:67.50px;height:36.20px;background:#009688;border:2px solid #c9c9c9;box-sizing:border-box"></div>
<span style="left:15.45px;width:600px;text-align:center;top:410.49px;font-size:11px;line-height:11px;font-weight:bold;color:#fff;">Save</span>
<div style="left:357.3px;top:397.6px;width:66.80px;height:36.20px;background:#009688;border:2px solid #c9c9c9;box-sizing:border-box"></div>
<span style="left:90.70px;width:600px;text-align:center;top:410.49px;font-size:11px;line-height:11px;font-weight:bold;color:#0a3a34;">Print</span>
<div style="left:431.8px;top:397.6px;width:70.20px;height:36.20px;background:#009688;border:2px solid #c9c9c9;box-sizing:border-box"></div>
<span style="left:166.90px;width:600px;text-align:center;top:405.29px;font-size:11px;line-height:11px;font-weight:bold;color:#fff;">Print</span>
<span style="left:166.90px;width:600px;text-align:center;top:417.29px;font-size:11px;line-height:11px;font-weight:bold;color:#fff;">Preview</span>
<div style="left:512px;top:397.8px;width:62.40px;height:35.60px;background:#009688;border:2px solid #c9c9c9;box-sizing:border-box"></div>
<span style="left:243.20px;width:600px;text-align:center;top:410.39px;font-size:11px;line-height:11px;font-weight:bold;color:#fff;">Modify</span>
<div style="left:582.3px;top:397.8px;width:71.60px;height:35.60px;background:#009688;border:2px solid #c9c9c9;box-sizing:border-box"></div>
<span style="left:318.10px;width:600px;text-align:center;top:410.39px;font-size:11px;line-height:11px;font-weight:bold;color:#fff;">Cancel</span>
<div style="left:662.2px;top:396.7px;width:67.30px;height:36.00px;background:#009688;border:2px solid #c9c9c9;box-sizing:border-box"></div>
<span style="left:395.85px;width:600px;text-align:center;top:409.49px;font-size:11px;line-height:11px;font-weight:bold;color:#fff;">Display</span>
<div style="left:740.4px;top:396.7px;width:66.80px;height:36.00px;background:#009688;border:2px solid #c9c9c9;box-sizing:border-box"></div>
<span style="left:473.80px;width:600px;text-align:center;top:409.49px;font-size:11px;line-height:11px;font-weight:bold;color:#fff;">Delete</span>
<div style="left:157.6px;top:437.3px;width:757.70px;height:60.50px;background:#009688;border-top:1px solid #3c5e5a;box-sizing:border-box"></div>
<div class="cb" style="left:171.7px;top:443.5px;width:9.9px;height:9.4px"></div>
<svg style="position:absolute;left:171.7px;top:443.5px" width="9.9" height="9.4" viewBox="0 0 10 10" preserveAspectRatio="none" fill="none" stroke="#4a4a4a" stroke-width="1.15"><path d="M2.2 5 L4.2 7.2 L8 2.6"/></svg>
<span style="left:187.4px;top:441.64px;font-size:13.3px;line-height:13.3px;font-weight:normal;color:#fff;transform:scaleX(1.0062);-webkit-text-stroke:0.35px #fff;">Print On Plain Stationary</span>
<div class="cb" style="left:171.7px;top:461px;width:9.9px;height:9.2px"></div>
<svg style="position:absolute;left:171.7px;top:461px" width="9.9" height="9.2" viewBox="0 0 10 10" preserveAspectRatio="none" fill="none" stroke="#4a4a4a" stroke-width="1.15"><path d="M2.2 5 L4.2 7.2 L8 2.6"/></svg>
<span style="left:186.2px;top:459.90px;font-size:11.7px;line-height:11.7px;font-weight:bold;color:#fff;transform:scaleX(0.9991);">Print on 5.50 X 4 Stationary</span>
<div class="cb" style="left:172.9px;top:484px;width:8.9px;height:9px"></div>
<span style="left:187.4px;top:482.99px;font-size:11px;line-height:11px;font-weight:bold;color:#fff;transform:scaleX(0.9840);">Print 3 Same Copy in one Page</span>
<div class="cb" style="left:369.4px;top:443.4px;width:10px;height:9.8px"></div>
<svg style="position:absolute;left:369.4px;top:443.4px" width="10" height="9.8" viewBox="0 0 10 10" preserveAspectRatio="none" fill="none" stroke="#4a4a4a" stroke-width="1.15"><path d="M2.2 5 L4.2 7.2 L8 2.6"/></svg>
<span style="left:385px;top:441.24px;font-size:13.3px;line-height:13.3px;font-weight:normal;color:#fff;transform:scaleX(1.0184);-webkit-text-stroke:0.35px #fff;">Single Receipt Printing</span>
<div class="cb" style="left:369.4px;top:460px;width:10px;height:9.6px"></div>
<span style="left:385px;top:459.40px;font-size:11.7px;line-height:11.7px;font-weight:bold;color:#fff;transform:scaleX(0.9831);">Print on 8X3.5 Stationary</span>
<div class="cb" style="left:384.4px;top:483.9px;width:9.8px;height:9.7px"></div>
<span style="left:399.1px;top:483.19px;font-size:11px;line-height:11px;font-weight:bold;color:#fff;transform:scaleX(0.9876);">Not Print Gr. Date and Weight</span>
<div class="cb" style="left:558.6px;top:440.8px;width:9.4px;height:8.9px"></div>
<svg style="position:absolute;left:558.6px;top:440.8px" width="9.4" height="8.9" viewBox="0 0 10 10" preserveAspectRatio="none" fill="none" stroke="#4a4a4a" stroke-width="1.15"><path d="M2.2 5 L4.2 7.2 L8 2.6"/></svg>
<span style="left:573.5px;top:440.43px;font-size:11.3px;line-height:11.3px;font-weight:bold;color:#fff;transform:scaleX(0.9964);">Center Printing</span>
<div class="cb" style="left:558.6px;top:460.5px;width:9.4px;height:8.9px"></div>
<svg style="position:absolute;left:558.6px;top:460.5px" width="9.4" height="8.9" viewBox="0 0 10 10" preserveAspectRatio="none" fill="none" stroke="#4a4a4a" stroke-width="1.15"><path d="M2.2 5 L4.2 7.2 L8 2.6"/></svg>
<span style="left:573.5px;top:460.33px;font-size:11.3px;line-height:11.3px;font-weight:bold;color:#fff;transform:scaleX(0.9712);">Bold All text</span>
<div class="cb" style="left:617.4px;top:484.1px;width:8.8px;height:8.8px"></div>
<span style="left:631.5px;top:483.39px;font-size:11px;line-height:11px;font-weight:bold;color:#fff;transform:scaleX(0.9883);">Print Veh.No. Instead Ref.No.</span>
<div style="left:757px;top:490px;width:120px;height:7.5px;overflow:hidden">
<div class="cb" style="left:6px;top:5.8px;width:8.8px;height:8.8px"></div>
<span style="left:20.2px;top:5.2px;font-size:11px;line-height:11px;font-weight:bold;color:#fff;transform:scaleX(0.93)">Not Print Caption</span>
</div>
<div style="left:682px;top:440.2px;width:84.00px;height:12.30px;border:1px solid #2a6e66;box-sizing:border-box"></div>
<span style="left:685.5px;top:440.72px;font-size:11.2px;line-height:11.2px;font-weight:bold;color:#fff;transform:scaleX(0.9538);">Left Margin</span>
<div style="left:771.2px;top:438.4px;width:42.60px;height:16.30px;background:#fff;border:1px solid #9a9a9a;box-sizing:border-box"></div>
<span style="right:211.50px;top:441.83px;font-size:11.3px;line-height:11.3px;font-weight:bold;color:#000;">200</span>
<div style="left:682px;top:458.2px;width:84.00px;height:13.20px;border:1px solid #2a6e66;box-sizing:border-box"></div>
<span style="left:685.5px;top:459.52px;font-size:11.2px;line-height:11.2px;font-weight:bold;color:#fff;transform:scaleX(0.9475);">Copy</span>
<div style="left:771.2px;top:456.9px;width:42.60px;height:16.20px;background:#fff;border:1px solid #9a9a9a;box-sizing:border-box"></div>
<span style="right:211.50px;top:460.33px;font-size:11.3px;line-height:11.3px;font-weight:bold;color:#000;">3</span>
<div style="left:875.7px;top:441.1px;width:36.60px;height:14.90px;background:#fff;border:1px solid #9a9a9a;box-sizing:border-box"></div>
<span style="right:114.00px;top:444.33px;font-size:11.3px;line-height:11.3px;font-weight:bold;color:#000;">1</span>
<div style="left:875.7px;top:461.8px;width:36.60px;height:15.10px;background:#fff;border:1px solid #9a9a9a;box-sizing:border-box"></div>
<span style="right:114.00px;top:464.83px;font-size:11.3px;line-height:11.3px;font-weight:bold;color:#000;">1</span>
<div style="left:0px;top:527.1px;width:1024.00px;height:18.80px;background:#f0e68c"></div>
<div style="left:1px;top:529.9px;width:183.60px;height:13.60px;border:1px solid #a8a498;box-sizing:border-box"></div>
<span style="left:4.9px;top:532.40px;font-size:10.4px;line-height:10.4px;font-weight:bold;color:#101010;transform:scaleX(0.8810);-webkit-text-stroke:0.25px currentColor;">CHAHAL FREIGHT CARRIERS PVT. LTD.</span>
<span style="left:188.6px;top:531.30px;font-size:10.4px;line-height:10.4px;font-weight:bold;color:#101010;transform:scaleX(0.8001);-webkit-text-stroke:0.25px currentColor;">BRANCH :</span>
<span style="left:237px;top:531.30px;font-size:10.4px;line-height:10.4px;font-weight:bold;color:#101010;transform:scaleX(0.8094);-webkit-text-stroke:0.25px currentColor;">CHAHAL FREIGHT CARRIERS PVT LTD (BATHINDA)</span>
<span style="left:452px;top:531.13px;font-size:10.6px;line-height:10.6px;font-weight:bold;color:#101010;transform:scaleX(0.8267);-webkit-text-stroke:0.25px currentColor;">BTD</span>
<div style="left:476.3px;top:529.3px;width:13.70px;height:14.70px;background:#20a8a0;border:1px solid #204848;box-sizing:border-box"></div>
<svg style="position:absolute;left:477px;top:530px" width="12" height="13" viewBox="0 0 12 13" fill="none" stroke="#0a3a3a" stroke-width="0.8"><rect x="2" y="1.5" width="8" height="2.5"/><path d="M2 6 H10 M2 8.5 H10 M2 11 H10 M4.5 5 V12 M7.5 5 V12"/></svg>
<div style="left:490.8px;top:529.6px;width:51.50px;height:14.20px;background:#f00;border:1px solid #801818;border-right-color:#f06060;border-bottom-color:#f06060;box-sizing:border-box"></div>
<span style="left:495px;top:531.41px;font-size:10.5px;line-height:10.5px;font-weight:bold;color:#ffff00;transform:scaleX(0.9257);">SMS OFF</span>
<span style="left:545.3px;top:531.10px;font-size:10.4px;line-height:10.4px;font-weight:normal;color:#101010;transform:scaleX(0.8075);-webkit-text-stroke:0.25px currentColor;">Sms Sent to</span>
<div style="left:594.3px;top:529.6px;width:64.00px;height:14.40px;background:#38c838;border:1px solid #90e090;border-right:1.5px solid #505050;border-bottom:1.5px solid #505050;box-sizing:border-box"></div>
<div style="left:601px;top:530.5px;width:13px;height:13px;border-radius:7px;background:#fff"></div>
<div style="left:602.8px;top:532.3px;width:9.4px;height:9.4px;border-radius:5px;background:#38c838"></div>
<svg style="position:absolute;left:604.5px;top:534px" width="6" height="6" viewBox="0 0 6 6"><path d="M0.8 1.2 Q1 0.3 1.8 0.5 L2.4 1.8 Q2.2 2.4 1.8 2.5 Q2.5 3.8 3.6 4.3 Q3.8 3.8 4.3 3.7 L5.5 4.3 Q5.6 5.2 4.8 5.4 Q2.5 5.4 0.8 1.2 Z" fill="#fff"/></svg>
<span style="left:618.4px;top:531.41px;font-size:10.5px;line-height:10.5px;font-weight:bold;color:#ffff00;transform:scaleX(0.9341);">WA</span>
<span style="left:661.3px;top:531.70px;font-size:10.4px;line-height:10.4px;font-weight:bold;color:#f01010;transform:scaleX(0.7491);">SQL</span>
<span style="left:697.3px;top:531.70px;font-size:10.4px;line-height:10.4px;font-weight:bold;color:#f01010;transform:scaleX(0.9285);">3/1/2024 To 3/31/2025</span>
<div style="left:812px;top:529.6px;width:59.60px;height:14.20px;background:#f00;border:1px solid #801818;border-right-color:#f06060;border-bottom-color:#f06060;box-sizing:border-box"></div>
<span style="left:815.8px;top:531.41px;font-size:10.5px;line-height:10.5px;font-weight:bold;color:#ffff00;transform:scaleX(0.9191);">EMAIL OFF</span>
<span style="left:875px;top:531.10px;font-size:10.4px;line-height:10.4px;font-weight:normal;color:#101010;transform:scaleX(0.8127);-webkit-text-stroke:0.25px currentColor;">Email Status</span>
<svg style="position:absolute;left:1010px;top:535px" width="10" height="10" viewBox="0 0 10 10" fill="#a09a80"><rect x="7" y="1" width="1.5" height="1.5"/><rect x="4" y="4" width="1.5" height="1.5"/><rect x="7" y="4" width="1.5" height="1.5"/><rect x="1" y="7" width="1.5" height="1.5"/><rect x="4" y="7" width="1.5" height="1.5"/><rect x="7" y="7" width="1.5" height="1.5"/></svg>
<div style="left:0;top:546.2px;width:1024px;height:30px;background:linear-gradient(90deg,#d3e9d0 0px,#d6e8d2 150px,#dae6d6 250px,#dde5d8 290px,#e3e3df 400px,#dcdce2 474px,#d5dde5 555px,#d6e2dc 595px,#d7eacc 645px,#d9eacc 860px,#dbe9c4 1024px)"></div>
<svg style="position:absolute;left:12px;top:554.5px" width="12" height="13" viewBox="0 0 12 13" fill="#111"><path d="M0 1.8 L5 1.1 L5 6 L0 6 Z"/><path d="M6 0.95 L12 0 L12 6 L6 6 Z"/><path d="M0 7 L5 7 L5 11.9 L0 11.2 Z"/><path d="M6 7 L12 7 L12 13 L6 12.05 Z"/></svg>
<div style="left:36.8px;top:546.2px;width:214.70px;height:29.80px;background:#fdfdfd;border-bottom:1px solid #c8c8c8;box-sizing:border-box"></div>
<svg style="position:absolute;left:44px;top:554px" width="14" height="14" viewBox="0 0 14 14" fill="none" stroke="#2a2a2a" stroke-width="1.1"><circle cx="8.6" cy="5.4" r="3.9"/><path d="M5.8 8.2 L1.2 12.8"/></svg>
<span style="left:66px;top:556.33px;font-size:11.3px;line-height:11.3px;font-weight:normal;color:#3a3a3a;transform:scaleX(0.9585);">Type here to search</span>
<svg style="position:absolute;left:186px;top:546px" width="66" height="30" viewBox="0 0 66 30"><defs><linearGradient id="tg" x1="0" y1="0" x2="0" y2="1"><stop offset="0" stop-color="#d8d8f4"/><stop offset="0.5" stop-color="#b4b4e0"/><stop offset="1" stop-color="#8080b8"/></linearGradient><linearGradient id="gl" x1="0" y1="0" x2="1" y2="0"><stop offset="0" stop-color="#fff" stop-opacity="0"/><stop offset="0.5" stop-color="#c8dcf0" stop-opacity="0.8"/><stop offset="1" stop-color="#fff" stop-opacity="0"/></linearGradient></defs><path d="M8 19 Q30 14 64 12 L64 16 Q30 20 8 21 Z" fill="url(#gl)"/><path d="M20.6 2.6 L41.3 5.8 L46.5 12.3 L25.8 10.3 Z" fill="#9c9cd8"/><path d="M27 3.6 L31 8 M34 4.7 L38 9" stroke="#8484c4" stroke-width="1"/><path d="M19.4 10.5 L38 12.5 L41 25.5 L21.5 17.5 Z" fill="url(#tg)"/><ellipse cx="20.4" cy="14" rx="1.6" ry="3.6" fill="#9090c8"/><path d="M47 14.5 L54 13.5 L54 20.5 L47 21.5 Z" fill="#b8c8e8"/><ellipse cx="42.4" cy="18.8" rx="5" ry="7" transform="rotate(-12 42.4 18.8)" fill="#d8a010"/><ellipse cx="43.5" cy="18.5" rx="3" ry="5" transform="rotate(-12 43.5 18.5)" fill="#f0c030"/><circle cx="12.9" cy="15.2" r="0.9" fill="#404058"/><circle cx="23.9" cy="24.8" r="0.8" fill="#404058"/><circle cx="51" cy="8.1" r="0.9" fill="#404058"/></svg>
<svg style="position:absolute;left:262px;top:554px" width="15" height="14" viewBox="0 0 15 14" fill="none" stroke="#1a1a1a" stroke-width="1"><path d="M1 1.5 H10.5 M1 11.8 H10.5 M2.5 2 V11.3 M9 2 V11.3"/><path d="M12.8 4 V12.5"/><circle cx="12.8" cy="2.2" r="0.9" fill="#1a1a1a" stroke="none"/></svg>
<svg style="position:absolute;left:300px;top:553.5px" width="17" height="14" viewBox="0 0 17 14"><path d="M0 1 L6 1 L7.5 2.5 L16 2.5 L16 14 L0 14 Z" fill="#f8c848"/><path d="M0 4 L16 4 L16 14 L0 14 Z" fill="#fcd869"/><path d="M4 14 L4 8 L12 8 L12 14 L10 14 L10 10.5 L6 10.5 L6 14 Z" fill="#2f8ee0"/></svg>
<svg style="position:absolute;left:335px;top:551.5px" width="19" height="19" viewBox="0 0 19 19"><defs><linearGradient id="ff" x1="0.8" y1="0" x2="0.2" y2="1"><stop offset="0" stop-color="#ffd03a"/><stop offset="0.45" stop-color="#ff7a2a"/><stop offset="1" stop-color="#f0306a"/></linearGradient></defs><path d="M13 1 Q15 3 16 6 Q18.5 9 17.5 12.5 Q16 17.5 9.8 18 Q3.5 18 1.5 12.5 Q0.5 8.5 3 5.5 Q3.5 8 5 8.5 Q5 4.5 9 3 Q12.5 2 13 1 Z" fill="url(#ff)"/><circle cx="10.2" cy="10.4" r="4" fill="#7b3ee0"/><path d="M6 8 Q8 6 11 6.5 Q8 7.5 7 10 Z" fill="#ff9a3a"/></svg>
<div style="left:330px;top:574.2px;width:29.80px;height:1.80px;background:#3478d4"></div>
<svg style="position:absolute;left:372px;top:551.8px" width="19" height="18" viewBox="0 0 19 18"><defs><linearGradient id="eg" x1="0" y1="1" x2="1" y2="0"><stop offset="0" stop-color="#0c5cb8"/><stop offset="0.5" stop-color="#1e90e0"/><stop offset="1" stop-color="#50d070"/></linearGradient></defs><path d="M9.5 0.5 Q16.5 0.5 18.5 7.5 Q19 11 15 11.5 L7 11.5 Q8 15 12 15 Q14.5 15 16.5 14 Q14 17.5 9.5 17.5 Q2 17.5 0.5 10 Q0 3 6 1.2 Q7.5 0.5 9.5 0.5 Z" fill="url(#eg)"/><path d="M3.5 8 Q5 4.5 9 4.5 Q12.5 4.5 13 8 Z" fill="#2a9ae6" opacity="0.6"/></svg>
<svg style="position:absolute;left:408.8px;top:552.8px" width="19" height="16" viewBox="0 0 19 16"><path d="M0 6 L9.5 0 L19 6 L19 16 L0 16 Z" fill="#1a78d0"/><path d="M3 5 L16 5 L16 9 L9.5 12 L3 9 Z" fill="#fff"/><path d="M0 6 L9.5 12 L19 6 L19 16 L0 16 Z" fill="#30a0f0"/></svg>
<div style="left:446px;top:551.8px;width:18px;height:18px;border-radius:50%;background:conic-gradient(from -30deg,#e8453c 0 120deg,#f9bb2d 120deg 240deg,#34a853 240deg 360deg)"></div>
<div style="left:450.5px;top:556.3px;width:9px;height:9px;border-radius:50%;background:#3a7ce8;box-shadow:0 0 0 1.6px #fff"></div>
<svg style="position:absolute;left:483px;top:553.8px" width="18" height="14" viewBox="0 0 18 14"><path d="M5 0 L17 2 L16 10 L4 8 Z" fill="#58b4f0"/><path d="M0 11 L4 9 L15 11 L11 13.5 Z" fill="#d0d4d8"/></svg>
<div style="left:510.4px;top:546.2px;width:36.10px;height:29.80px;background:#eceef2"></div>
<div style="left:519.2px;top:551.8px;width:18.5px;height:18px;background:radial-gradient(circle at 50% 50%,#f8d040 0 15%,#f0a868 30%,#e89858 100%)"></div>
<span style="left:228.50px;width:600px;text-align:center;top:554.24px;font-size:5.5px;line-height:5.5px;font-weight:bold;color:#803030;">S</span>
<span style="left:228.50px;width:600px;text-align:center;top:565.74px;font-size:5.5px;line-height:5.5px;font-weight:bold;color:#803030;">R</span>
<span style="left:222.50px;width:600px;text-align:center;top:560.24px;font-size:5.5px;line-height:5.5px;font-weight:bold;color:#803030;">S</span>
<span style="left:234.50px;width:600px;text-align:center;top:560.24px;font-size:5.5px;line-height:5.5px;font-weight:bold;color:#803030;">R</span>
<div style="left:510.4px;top:574.2px;width:36.10px;height:1.80px;background:#3478d4"></div>
<svg style="position:absolute;left:729px;top:551px" width="22" height="19" viewBox="0 0 22 19"><defs><linearGradient id="cl" x1="0" y1="0" x2="0" y2="1"><stop offset="0" stop-color="#c8e0f8"/><stop offset="1" stop-color="#88b8e8"/></linearGradient></defs><path d="M3 18 Q0 18 1 14.5 Q2 12 5 12.5 Q6 8 10.5 8.5 Q14.5 9 15 12 Q19 12 19 15 Q19 18 16 18 Z" fill="url(#cl)"/><circle cx="14.4" cy="5.2" r="4.4" fill="#d42a2a"/><path d="M14.6 2.8 V7.6 M13.6 3.6 L14.6 2.8" stroke="#fff" stroke-width="0.9" fill="none"/></svg>
<span style="left:754.4px;top:556.27px;font-size:11.5px;line-height:11.5px;font-weight:normal;color:#2a2a2a;transform:scaleX(0.8212);">35°C</span>
<span style="left:783.3px;top:556.27px;font-size:11.5px;line-height:11.5px;font-weight:normal;color:#2a2a2a;transform:scaleX(0.9130);">Mostly cloudy</span>
<svg style="position:absolute;left:868px;top:557px" width="10" height="7" viewBox="0 0 10 7" fill="none" stroke="#222" stroke-width="1.1"><path d="M0.8 6 L5 1.5 L9.2 6"/></svg>
<svg style="position:absolute;left:892.5px;top:554.5px" width="10" height="13" viewBox="0 0 10 13" fill="none" stroke="#333" stroke-width="1"><path d="M3 1.5 H7 M3 11.5 H7"/><rect x="2" y="4" width="5" height="5" rx="0.8"/><path d="M7 5.5 L9 4.5 V8.5 L7 7.5"/><path d="M1 3 V10"/></svg>
<span style="left:914px;top:550.69px;font-size:9.4px;line-height:9.4px;font-weight:normal;color:#2a2a2a;transform:scaleX(0.8319);">ENG</span>
<span style="left:918.7px;top:563.54px;font-size:9.4px;line-height:9.4px;font-weight:normal;color:#2a2a2a;transform:scaleX(0.9173);">IN</span>
<span style="left:942px;top:550.69px;font-size:9.4px;line-height:9.4px;font-weight:normal;color:#2a2a2a;transform:scaleX(0.8909);">10:56 AM</span>
<span style="left:940.6px;top:563.54px;font-size:9.4px;line-height:9.4px;font-weight:normal;color:#2a2a2a;transform:scaleX(0.9279);">8/27/2024</span>
<svg style="position:absolute;left:992px;top:554.5px" width="18" height="18" viewBox="0 0 18 18"><path d="M1 0.5 H13.5 V10 H5 L2.5 12.5 V10 H1 Z" fill="#1a1a1a"/><path d="M3 3 H11 M3 5.5 H11" stroke="#d8e0d8" stroke-width="0.8"/><circle cx="12.6" cy="11.8" r="5.2" fill="#d4d4d4" stroke="#707070" stroke-width="0.9"/><path d="M12.8 9.2 V14.4 M11.6 10.2 L12.8 9.2" stroke="#202020" stroke-width="1.1" fill="none"/></svg>
<div style="left:1019.5px;top:546.2px;width:0.80px;height:29.80px;background:#b8c8b4"></div>
</body></html>
